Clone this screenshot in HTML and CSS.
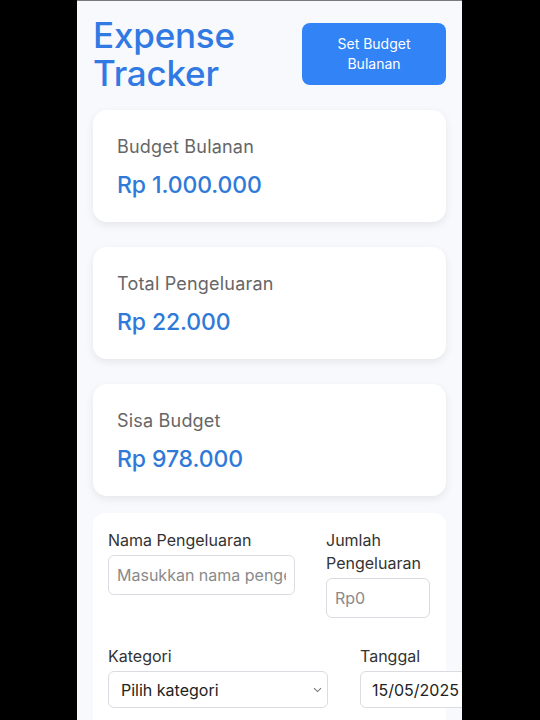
FILE: index.html
```html
<!DOCTYPE html>
<html lang="id">
<head>
<meta charset="utf-8">
<title>Expense Tracker</title>
<link rel="stylesheet" href="styles.css">
</head>
<body>
<div class="screen">
  <header class="header">
    <h1 class="title">Expense Tracker</h1>
    <button class="btn-budget">Set Budget Bulanan</button>
  </header>

  <section class="card">
    <div class="card-label">Budget Bulanan</div>
    <div class="card-value">Rp 1.000.000</div>
  </section>
  <section class="card">
    <div class="card-label">Total Pengeluaran</div>
    <div class="card-value">Rp 22.000</div>
  </section>
  <section class="card">
    <div class="card-label">Sisa Budget</div>
    <div class="card-value">Rp 978.000</div>
  </section>

  <form class="form-card">
    <div class="row">
      <div class="field field-name">
        <label class="label">Nama Pengeluaran</label>
        <input class="input" type="text" placeholder="Masukkan nama pengeluaran">
      </div>
      <div class="field field-amount">
        <label class="label">Jumlah Pengeluaran</label>
        <input class="input" type="text" placeholder="Rp0">
      </div>
    </div>
    <div class="row row-2">
      <div class="field field-cat">
        <label class="label">Kategori</label>
        <div class="select-wrap">
          <select class="select">
            <option>Pilih kategori</option>
          </select>
          <svg class="chevron" width="9" height="6" viewBox="0 0 9 6" aria-hidden="true">
            <path d="M1 1.2 L4.5 4.6 L8 1.2" fill="none" stroke="#777" stroke-width="1.1"/>
          </svg>
        </div>
      </div>
      <div class="field field-date">
        <label class="label">Tanggal</label>
        <input class="input input-date" type="text" value="15/05/2025">
      </div>
    </div>
  </form>
</div>
</body>
</html>
```

FILE: styles.css
```css
* { box-sizing: border-box; }
html, body {
  margin: 0;
  padding: 0;
  background: #000;
}
body {
  font-family: Inter, "Noto Sans", sans-serif;
}
.screen {
  width: 385px;
  height: 720px;
  margin-left: 77px;
  background: #f7f9fc;
  border-top: 1px solid #7a7a7a;
  overflow: hidden;
  padding: 0 16px;
}
.header {
  display: flex;
  align-items: center;
  justify-content: space-between;
  padding-top: 15px;
  padding-bottom: 18px;
}
.title {
  margin: 0;
  font-size: 35px;
  line-height: 38px;
  font-weight: 500;
  color: #3179e3;
  letter-spacing: -0.2px;
  width: 170px;
}
.btn-budget {
  width: 144px;
  height: 62px;
  border: none;
  border-radius: 8px;
  background: #3183f6;
  color: #fff;
  font-family: inherit;
  font-size: 14px;
  line-height: 20px;
  padding: 0 24px;
}
.card {
  background: #fff;
  border-radius: 14px;
  box-shadow: 0 3px 8px rgba(0, 0, 0, 0.08);
  padding: 23px 24px 21px;
  margin-bottom: 25px;
}
.card-label {
  font-size: 18px;
  line-height: 27px;
  color: #666;
  letter-spacing: 0.2px;
}
.card-value {
  margin-top: 9px;
  font-size: 23px;
  line-height: 32px;
  font-weight: 500;
  color: #2f7ad8;
  letter-spacing: -0.1px;
}
.form-card {
  background: #fff;
  border-radius: 12px;
  margin-top: -8px;
  padding: 16px 15px;
  height: 260px;
}
.row {
  display: flex;
  gap: 31px;
}
.row-2 {
  margin-top: 27px;
  gap: 32px;
}
.field {
  display: flex;
  flex-direction: column;
  gap: 3px;
  flex-shrink: 0;
}
.field-name { width: 187px; }
.field-amount { width: 104px; }
.field-cat { width: 220px; }
.field-date { width: 130px; }
.label {
  font-size: 16px;
  line-height: 23px;
  color: #333;
}
.input, .select {
  height: 40px;
  border: 1px solid #d9dce1;
  border-radius: 6px;
  background: #fff;
  font-family: inherit;
  font-size: 16px;
  padding: 0 8px;
  color: #222;
  width: 100%;
}
.input::placeholder { color: #8a8a8a; }
.select-wrap {
  position: relative;
}
.select {
  display: block;
  height: 37px;
  padding: 0 12px;
  appearance: none;
  -webkit-appearance: none;
}
.chevron {
  position: absolute;
  right: 6px;
  top: 16px;
}
.input-date {
  height: 37px;
  padding: 0 11px;
}
```
